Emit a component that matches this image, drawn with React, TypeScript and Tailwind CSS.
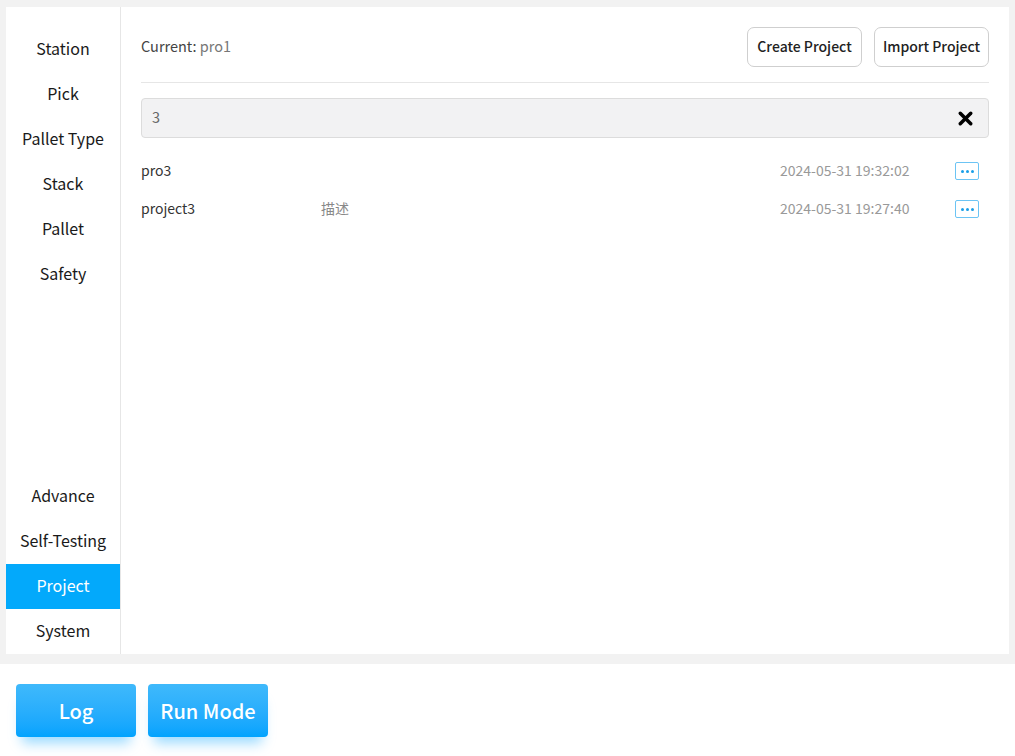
import { X } from "lucide-react";

const TOP_ITEMS = ["Station", "Pick", "Pallet Type", "Stack", "Pallet", "Safety"];
const BOTTOM_ITEMS = ["Advance", "Self-Testing", "Project", "System"];

const ROWS = [
  { name: "pro3", desc: "", time: "2024-05-31 19:32:02" },
  { name: "project3", desc: "描述", time: "2024-05-31 19:27:40" },
];

function NavItem({ label, active }: { label: string; active?: boolean }) {
  return (
    <div
      className={
        active
          ? "flex h-[45px] items-center justify-center bg-[#03a9fb] pb-[4px] text-[16px] text-white"
          : "flex h-[45px] items-center justify-center pb-[4px] text-[16px] text-[#1a1a1a]"
      }
    >
      {label}
    </div>
  );
}

export default function App() {
  return (
    <div
      className="flex h-[756px] w-[1015px] flex-col bg-[#f2f2f2]"
      style={{ fontFamily: '"Noto Sans CJK SC", "Noto Sans", sans-serif' }}
    >
      <div className="mx-[6px] mt-[7px] flex h-[647px] bg-white">
        <aside className="flex w-[115px] shrink-0 flex-col justify-between border-r border-[#e6e6e6] pt-[20px]">
          <div>
            {TOP_ITEMS.map((t) => (
              <NavItem key={t} label={t} />
            ))}
          </div>
          <div>
            {BOTTOM_ITEMS.map((t) => (
              <NavItem key={t} label={t} active={t === "Project"} />
            ))}
          </div>
        </aside>

        <main className="flex-1 pl-[20px] pr-[20px] pt-[20px]">
          <div className="flex items-center justify-between border-b border-[#e6e6e6] pb-[15px]">
            <div className="pb-[2px] text-[14.5px] text-[#444]">
              Current: <span className="text-[#777]">pro1</span>
            </div>
            <div className="flex gap-[12px]">
              <button className="h-[40px] w-[115px] rounded-[7px] border border-[#cfcfcf] bg-white pb-[2px] text-[14px] font-medium text-[#222]">
                Create Project
              </button>
              <button className="h-[40px] w-[115px] rounded-[7px] border border-[#cfcfcf] bg-white pb-[2px] text-[14px] font-medium text-[#222]">
                Import Project
              </button>
            </div>
          </div>

          <div className="mt-[15px] flex h-[40px] items-center justify-between rounded-[4px] border border-[#dcdcdc] bg-[#f2f2f3] pl-[10px] pr-[12px]">
            <span className="pb-[2px] text-[14.5px] text-[#666]">3</span>
            <X className="h-[21px] w-[21px] text-black" strokeWidth={4} />
          </div>

          <div className="mt-[14px]">
            {ROWS.map((r) => (
              <div key={r.name} className="flex h-[38px] items-center text-[14px]">
                <div className="w-[180px] pb-[2px] text-[#333]">{r.name}</div>
                <div className="flex-1 pb-[2px] text-[14px] text-[#888]">{r.desc}</div>
                <div className="w-[175px] pb-[2px] text-[14px] text-[#999]">{r.time}</div>
                <button className="mr-[10px] flex h-[18px] w-[24px] items-center justify-center gap-[2px] rounded-[2px] border border-[#6cc4f4] bg-white">
                  <span className="h-[3px] w-[3px] rounded-full bg-[#1a9fe8]" />
                  <span className="h-[3px] w-[3px] rounded-full bg-[#1a9fe8]" />
                  <span className="h-[3px] w-[3px] rounded-full bg-[#1a9fe8]" />
                </button>
              </div>
            ))}
          </div>
        </main>
      </div>

      <div className="mt-[10px] flex flex-1 gap-[12px] bg-white pl-[16px] pt-[20px]">
        <button className="h-[53px] w-[120px] rounded-[4px] bg-gradient-to-b from-[#3fb9fb] to-[#00a3fe] text-[20px] font-medium text-white shadow-[0_12px_12px_-6px_rgba(0,163,254,0.4)]">
          Log
        </button>
        <button className="h-[53px] w-[120px] rounded-[4px] bg-gradient-to-b from-[#3fb9fb] to-[#00a3fe] text-[20px] font-medium text-white shadow-[0_12px_12px_-6px_rgba(0,163,254,0.4)]">
          Run Mode
        </button>
      </div>
    </div>
  );
}
